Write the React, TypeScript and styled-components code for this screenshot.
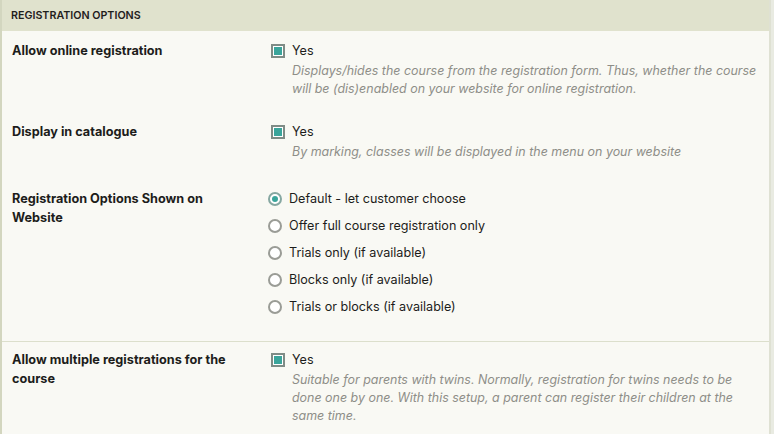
import React from "react";
import styled, { createGlobalStyle } from "styled-components";

const Global = createGlobalStyle`
  html, body { margin: 0; padding: 0; background: #e9ebe2; }
  body { font-family: "Inter", "Liberation Sans", sans-serif; color: #1d1d1b; }
  * { box-sizing: border-box; }
`;

const Panel = styled.div`
  width: 771px;
  height: 434px;
  background: #f9f9f4;
  border-left: 2px solid #d3d6bf;
  border-right: 2px solid #dfe1d3;
  overflow: hidden;
`;

const Header = styled.div`
  height: 31px;
  background: #e0e2cd;
  display: flex;
  align-items: center;
  padding-left: 9px;
  font-size: 10.7px;
  font-weight: 600;
  text-transform: uppercase;
  color: #1f201c;
`;

const Row = styled.div<{ $sep?: boolean; $top?: number; $bottom?: number }>`
  display: grid;
  grid-template-columns: 258px 1fr;
  padding: ${(p) => p.$top ?? 10}px 4px ${(p) => p.$bottom ?? 14}px 10px;
  border-top: ${(p) => (p.$sep ? "1px solid #dcdfcc" : "none")};
`;

const Label = styled.div<{ $offset?: number }>`
  font-size: 12.7px;
  font-weight: 700;
  line-height: 19px;
  padding-top: ${(p) => p.$offset ?? 0}px;
  padding-right: 26px;
`;

const Control = styled.div`
  display: flex;
  flex-direction: column;
`;

const Option = styled.label<{ $h?: number }>`
  display: flex;
  align-items: center;
  height: ${(p) => p.$h ?? 19}px;
  font-size: 12.6px;
  gap: 7px;
`;

const Box = styled.span`
  width: 14px;
  height: 14px;
  margin-left: 1px;
  border: 2px solid #7f8c86;
  background: #fff;
  padding: 1px;
  display: inline-flex;
  flex: none;
  &::after {
    content: "";
    flex: 1;
    background: #3aa59b;
  }
`;

const Radio = styled.span<{ $on?: boolean }>`
  width: 14px;
  height: 14px;
  margin-left: -2px;
  border-radius: 50%;
  border: 2px solid ${(p) => (p.$on ? "#86a7a1" : "#9a9c96")};
  background: #fff;
  flex: none;
  display: inline-flex;
  align-items: center;
  justify-content: center;
  &::after {
    content: "";
    width: 6px;
    height: 6px;
    border-radius: 50%;
    background: ${(p) => (p.$on ? "#3aa59b" : "transparent")};
  }
`;

const Desc = styled.div`
  margin-top: 2px;
  padding-left: 22px;
  font-size: 12.45px;
  line-height: 18px;
  font-style: italic;
  color: #8e8e88;
`;

const RadioGroup = styled.div`
  display: flex;
  flex-direction: column;
  margin-bottom: 7px;
`;

const radios = [
  "Default - let customer choose",
  "Offer full course registration only",
  "Trials only (if available)",
  "Blocks only (if available)",
  "Trials or blocks (if available)",
];

export default function App() {
  return (
    <>
      <Global />
      <Panel>
        <Header>Registration Options</Header>
        <Row>
          <Label>Allow online registration</Label>
          <Control>
            <Option>
              <Box />
              Yes
            </Option>
            <Desc>
              Displays/hides the course from the registration form. Thus, whether the course
              will be (dis)enabled on your website for online registration.
            </Desc>
          </Control>
        </Row>
        <Row>
          <Label>Display in catalogue</Label>
          <Control>
            <Option>
              <Box />
              Yes
            </Option>
            <Desc>By marking, classes will be displayed in the menu on your website</Desc>
          </Control>
        </Row>
        <Row>
          <Label $offset={4}>Registration Options Shown on Website</Label>
          <Control>
            <RadioGroup>
              {radios.map((r, i) => (
                <Option key={r} $h={27}>
                  <Radio $on={i === 0} />
                  {r}
                </Option>
              ))}
            </RadioGroup>
          </Control>
        </Row>
        <Row $sep $top={8}>
          <Label>Allow multiple registrations for the course</Label>
          <Control>
            <Option>
              <Box />
              Yes
            </Option>
            <Desc>
              Suitable for parents with twins. Normally, registration for twins needs to be
              done one by one. With this setup, a parent can register their children at the
              same time.
            </Desc>
          </Control>
        </Row>
      </Panel>
    </>
  );
}
